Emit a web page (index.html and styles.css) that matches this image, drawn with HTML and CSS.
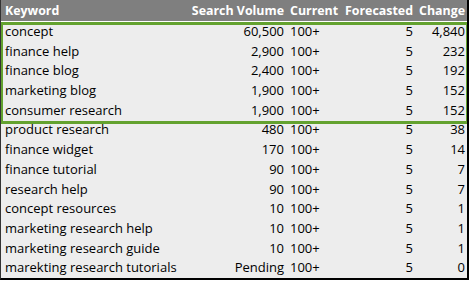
FILE: index.html
```html
<!DOCTYPE html>
<html>
<head>
<meta charset="utf-8">
<link rel="stylesheet" href="styles.css">
</head>
<body>
<div class="sheet">
  <div class="row head">
    <div class="c kw">Keyword</div>
    <div class="c sv">Search Volume</div>
    <div class="c cur">Current</div>
    <div class="c fc">Forecasted</div>
    <div class="c ch">Change</div>
  </div>
  <div class="gap"></div>
  <div class="group">
    <div class="row"><div class="c kw">concept</div><div class="c sv">60,500</div><div class="c cur">100+</div><div class="c fc">5</div><div class="c ch">4,840</div></div>
    <div class="row"><div class="c kw">finance help</div><div class="c sv">2,900</div><div class="c cur">100+</div><div class="c fc">5</div><div class="c ch">232</div></div>
    <div class="row"><div class="c kw">finance blog</div><div class="c sv">2,400</div><div class="c cur">100+</div><div class="c fc">5</div><div class="c ch">192</div></div>
    <div class="row"><div class="c kw">marketing blog</div><div class="c sv">1,900</div><div class="c cur">100+</div><div class="c fc">5</div><div class="c ch">152</div></div>
    <div class="row"><div class="c kw">consumer research</div><div class="c sv">1,900</div><div class="c cur">100+</div><div class="c fc">5</div><div class="c ch">152</div></div>
  </div>
  <div class="row"><div class="c kw">product research</div><div class="c sv">480</div><div class="c cur">100+</div><div class="c fc">5</div><div class="c ch">38</div></div>
  <div class="row"><div class="c kw">finance widget</div><div class="c sv">170</div><div class="c cur">100+</div><div class="c fc">5</div><div class="c ch">14</div></div>
  <div class="row"><div class="c kw">finance tutorial</div><div class="c sv">90</div><div class="c cur">100+</div><div class="c fc">5</div><div class="c ch">7</div></div>
  <div class="row"><div class="c kw">research help</div><div class="c sv">90</div><div class="c cur">100+</div><div class="c fc">5</div><div class="c ch">7</div></div>
  <div class="row"><div class="c kw">concept resources</div><div class="c sv">10</div><div class="c cur">100+</div><div class="c fc">5</div><div class="c ch">1</div></div>
  <div class="row"><div class="c kw">marketing research help</div><div class="c sv">10</div><div class="c cur">100+</div><div class="c fc">5</div><div class="c ch">1</div></div>
  <div class="row"><div class="c kw">marketing research guide</div><div class="c sv">10</div><div class="c cur">100+</div><div class="c fc">5</div><div class="c ch">1</div></div>
  <div class="row"><div class="c kw">marekting research tutorials</div><div class="c sv">Pending</div><div class="c cur">100+</div><div class="c fc">5</div><div class="c ch">0</div></div>
</div>
</body>
</html>
```
FILE: styles.css
```css
html, body {
  margin: 0;
  padding: 0;
  background: #ffffff;
}
.sheet {
  width: 466px;
  height: 278px;
  border-left: 1px solid #333;
  border-right: 2px solid #000;
  border-bottom: 2px solid #000;
  background: #ededed;
  font-family: "Open Sans", "Noto Sans", sans-serif;
  font-size: 13px;
  color: #000;
  overflow: hidden;
}
.row {
  display: grid;
  grid-template-columns: 185px 101px 54px 75px 1fr;
  height: 19.7px;
  align-items: center;
  line-height: 19.7px;
  white-space: nowrap;
}
.c {
  padding: 0 3px;
  overflow: visible;
}
.kw { padding-left: 4px; }
.sv, .fc, .ch { text-align: right; }
.ch { padding-right: 2px; }
.head {
  background: #7f7f7f;
  color: #fff;
  font-weight: bold;
  font-size: 12.4px;
  height: 21px;
  line-height: 21px;
}
.gap {
  height: 1px;
  background: #fff;
}
.group {
  position: relative;
}
.group::after {
  content: "";
  position: absolute;
  left: -1px;
  right: -2px;
  top: 0;
  bottom: -4px;
  border: 3px solid #63a22f;
  pointer-events: none;
}
```
